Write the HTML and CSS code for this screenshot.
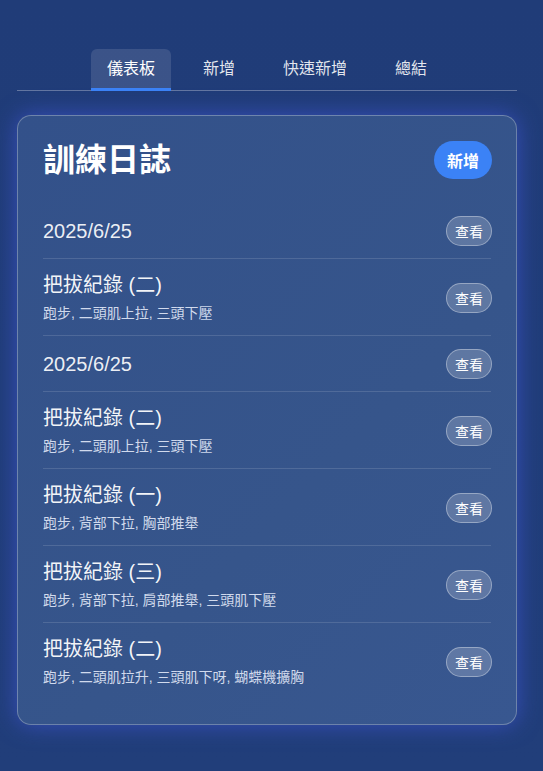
FILE: index.html
```html
<!DOCTYPE html>
<html lang="zh-Hant">
<head>
<meta charset="utf-8">
<title>訓練日誌</title>
<link rel="stylesheet" href="styles.css">
</head>
<body>
<div class="page">
  <nav class="tabs">
    <a class="tab active">儀表板</a>
    <a class="tab">新增</a>
    <a class="tab">快速新增</a>
    <a class="tab">總結</a>
  </nav>
  <section class="card">
    <header class="card-head">
      <h1 class="card-title">訓練日誌</h1>
      <button class="btn-primary">新增</button>
    </header>
    <ul class="list">
      <li class="row">
        <div class="info"><div class="date">2025/6/25</div></div>
        <button class="btn-view">查看</button>
      </li>
      <li class="row">
        <div class="info"><div class="name">把拔紀錄 (二)</div><div class="sub">跑步, 二頭肌上拉, 三頭下壓</div></div>
        <button class="btn-view">查看</button>
      </li>
      <li class="row">
        <div class="info"><div class="date">2025/6/25</div></div>
        <button class="btn-view">查看</button>
      </li>
      <li class="row">
        <div class="info"><div class="name">把拔紀錄 (二)</div><div class="sub">跑步, 二頭肌上拉, 三頭下壓</div></div>
        <button class="btn-view">查看</button>
      </li>
      <li class="row">
        <div class="info"><div class="name">把拔紀錄 (一)</div><div class="sub">跑步, 背部下拉, 胸部推舉</div></div>
        <button class="btn-view">查看</button>
      </li>
      <li class="row">
        <div class="info"><div class="name">把拔紀錄 (三)</div><div class="sub">跑步, 背部下拉, 肩部推舉, 三頭肌下壓</div></div>
        <button class="btn-view">查看</button>
      </li>
      <li class="row">
        <div class="info"><div class="name">把拔紀錄 (二)</div><div class="sub">跑步, 二頭肌拉升, 三頭肌下呀, 蝴蝶機擴胸</div></div>
        <button class="btn-view">查看</button>
      </li>
    </ul>
  </section>
</div>
</body>
</html>
```

FILE: styles.css
```css
html, body {
  margin: 0;
  padding: 0;
}
body {
  min-height: 771px;
  background: linear-gradient(180deg, #203c78 0%, #213e7a 100%);
  font-family: "Liberation Sans", "Noto Sans CJK TC", sans-serif;
  color: #ffffff;
}
.page {
  width: 500px;
  margin-left: 17px;
  padding-top: 49px;
}
.tabs {
  display: flex;
  justify-content: center;
  gap: 16px;
  border-bottom: 1px solid rgba(255, 255, 255, 0.3);
}
.tab {
  display: block;
  padding: 0 16px;
  height: 39px;
  line-height: 40px;
  font-size: 16px;
  color: rgba(255, 255, 255, 0.88);
  border-bottom: 3px solid transparent;
  border-radius: 6px 6px 0 0;
  margin-bottom: -1px;
}
.tab.active {
  background: rgba(255, 255, 255, 0.12);
  border-bottom-color: #3b82f6;
  color: #ffffff;
}
.card {
  margin-top: 24px;
  background: linear-gradient(135deg, #33518a 0%, #36558b 60%, #385790 100%);
  border: 1px solid rgba(255, 255, 255, 0.28);
  border-radius: 14px;
  padding: 25px 25px 25px 25px;
  box-shadow: 0 0 22px rgba(70, 90, 230, 0.6);
}
.card-head {
  display: flex;
  align-items: center;
  justify-content: space-between;
  height: 38px;
  margin-bottom: 24px;
}
.card-title {
  margin: 0;
  font-size: 32px;
  line-height: 38px;
  height: 38px;
  font-weight: 700;
}
.btn-primary {
  font-family: inherit;
  font-size: 16px;
  font-weight: 700;
  color: #ffffff;
  background: #3b82f6;
  border: none;
  border-radius: 19px;
  height: 38px;
  padding: 0 13px;
  margin-right: -1px;
}
.list {
  list-style: none;
  margin: 0;
  padding: 0;
}
.row {
  display: flex;
  align-items: center;
  justify-content: space-between;
  padding: 13px 0 12px;
  border-bottom: 1px solid rgba(255, 255, 255, 0.13);
}
.row:last-child {
  border-bottom: none;
}
.date {
  font-size: 20px;
  line-height: 28px;
  height: 28px;
  color: rgba(255, 255, 255, 0.92);
}
.name {
  font-size: 20px;
  line-height: 27px;
  height: 27px;
  color: rgba(255, 255, 255, 0.95);
}
.sub {
  margin-top: 4px;
  font-size: 14px;
  line-height: 20px;
  height: 20px;
  color: rgba(232, 238, 252, 0.88);
}
.btn-view {
  display: inline-flex;
  align-items: center;
  justify-content: center;
  box-sizing: border-box;
  height: 30px;
  font-family: inherit;
  font-size: 14px;
  font-weight: 400;
  color: #ffffff;
  background: rgba(255, 255, 255, 0.2);
  border: 1px solid rgba(255, 255, 255, 0.35);
  border-radius: 15px;
  padding: 0 8px;
  margin-right: -1px;
}
```
